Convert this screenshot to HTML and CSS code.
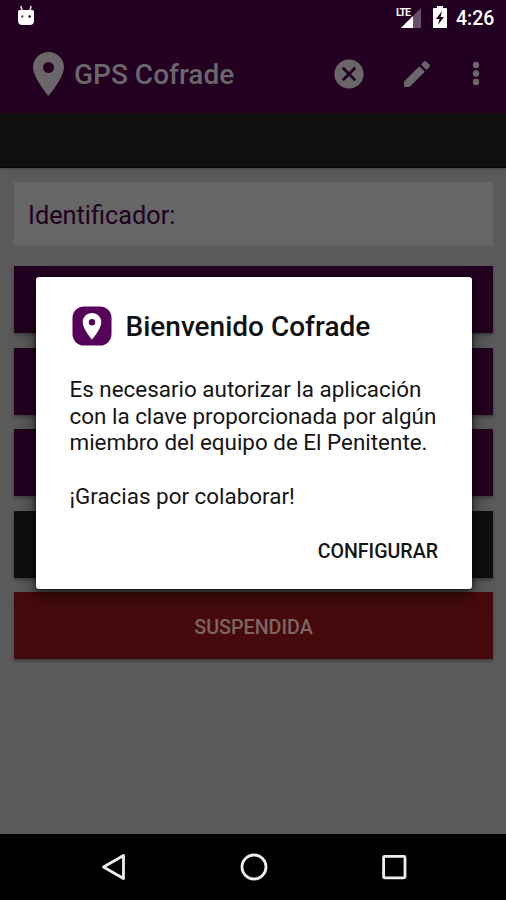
FILE: index.html
```html
<!DOCTYPE html>
<html lang="es">
<head>
<meta charset="utf-8">
<title>GPS Cofrade</title>
<link rel="stylesheet" href="styles.css">
</head>
<body>
<div class="screen">
  <header class="header">
    <div class="status">
      <svg class="debug" width="18" height="22" viewBox="0 0 18 22"><path d="M4 1l1 5M14 1l-1 5" stroke="#ddd" stroke-width="1.6"/><path d="M1 6.500q0-1.500 1.500-1.500h13q1.500 0 1.500 1.500v9q0 4.500-4.500 4.500h-7q-4.500 0-4.500-4.500z" fill="#fff"/><circle cx="5.200" cy="11.500" r="1.200" fill="#5b5060"/><circle cx="12.700" cy="11.500" r="1.300" fill="#230021"/></svg>
      <div class="signal">
        <span class="lte">LTE</span>
        <svg width="22" height="22" viewBox="0 0 22 22"><path d="M21 1v20H1z" fill="#68506a"/><path d="M13 9v12H1z" fill="#fff"/></svg>
      </div>
      <svg class="battery" width="14" height="22" viewBox="0 0 14 22"><path d="M4 0h6v2h3q1 0 1 1v18q0 1-1 1H1q-1 0-1-1V3q0-1 1-1h3z" fill="#fff"/><path d="M9 5L3 13h3.500L5 19l6-8H7.500z" fill="#230021"/></svg>
      <span class="clock">4:26</span>
    </div>
    <div class="toolbar">
      <svg class="pin" width="31" height="44" viewBox="0 0 31 44"><path fill-rule="evenodd" d="M15.500 0C7 0 0 6.700 0 15.300C0 26 15.500 44 15.500 44S31 26 31 15.300C31 6.700 24 0 15.500 0zm0 10a5.500 5.500 0 1 1 0 11a5.500 5.500 0 1 1 0-11z" fill="#6a666a"/></svg>
      <span class="title">GPS Cofrade</span>
      <svg class="close" width="30" height="30" viewBox="0 0 30 30"><circle cx="15" cy="15" r="14.600" fill="#6a666a"/><path d="M8.800 8.800l12.400 12.400M21.200 8.800L8.800 21.200" stroke="#230021" stroke-width="2.800"/></svg>
      <svg class="edit" width="28" height="28" viewBox="0 0 28 28"><path d="M1 21.500V27h5.500L21.800 11.700l-5.500-5.500zM26.300 7.200q1.300-1.300 0-2.600L23.400 1.700q-1.300-1.300-2.600 0L18 4.500l5.500 5.500z" fill="#6a666a"/></svg>
      <svg class="more" width="8" height="26" viewBox="0 0 8 26"><g fill="#6a666a"><circle cx="4" cy="4" r="3.200"/><circle cx="4" cy="12.500" r="3.200"/><circle cx="4" cy="21" r="3.200"/></g></svg>
    </div>
  </header>
  <div class="band"></div>
  <main class="content">
    <div class="field"><span>Identificador:</span></div>
    <div class="actions">
      <div class="action"></div>
      <div class="action"></div>
      <div class="action"></div>
      <div class="action dark"></div>
      <div class="action red"><span>SUSPENDIDA</span></div>
    </div>
  </main>
  <nav class="nav">
    <svg width="28" height="30" viewBox="0 0 28 30"><path d="M23.500 3.500v23L3.500 15z" fill="none" stroke="#eee" stroke-width="2.800" stroke-linejoin="round"/></svg>
    <svg width="28" height="30" viewBox="0 0 28 30"><circle cx="14" cy="15" r="12" fill="none" stroke="#eee" stroke-width="2.800"/></svg>
    <svg width="28" height="30" viewBox="0 0 28 30"><rect x="3.600" y="4.400" width="21.400" height="21.400" rx="1" fill="none" stroke="#eee" stroke-width="2.800"/></svg>
  </nav>
  <section class="dialog">
    <div class="dialog-head">
      <svg width="40" height="40" viewBox="0 0 40 40"><rect x=".5" y=".5" width="39" height="39" rx="11.500" fill="#550059"/><path fill-rule="evenodd" d="M20 7C14.800 7 10.700 11 10.700 16.200C10.700 23 20 33.500 20 33.500S29.300 23 29.300 16.200C29.300 11 25.200 7 20 7zm0 6a3.200 3.200 0 1 1 0 6.400a3.200 3.200 0 1 1 0-6.400z" fill="#fff"/></svg>
      <h1>Bienvenido Cofrade</h1>
    </div>
    <div class="message">
      <p>Es necesario autorizar la aplicación<br>con la clave proporcionada por algún<br>miembro del equipo de El Penitente.</p>
      <p>¡Gracias por colaborar!</p>
    </div>
    <div class="dialog-foot"><span>CONFIGURAR</span></div>
  </section>
</div>
</body>
</html>
```

FILE: styles.css
```css
* { box-sizing: border-box; }
body { margin: 0; font-family: Roboto, "Liberation Sans", sans-serif; }
svg { display: block; flex: none; }
.screen { position: relative; display: flex; flex-direction: column; width: 506px; height: 900px; overflow: hidden; background: #5a5a5a; }
.header { height: 113px; background: #230021; }
.status { display: flex; align-items: center; height: 34px; padding: 0 11px 0 17px; }
.debug { margin: -2px auto 0 0; }
.signal { position: relative; width: 22px; height: 22px; margin-right: 11px; }
.lte { position: absolute; left: -5px; top: 1px; padding: 0 1px; background: #230021; color: #fff; font-size: 10.5px; font-weight: 700; line-height: 11px; letter-spacing: -1px; }
.signal svg { margin-top: 1px; }
.clock { width: 39px; margin-left: 9px; color: #fff; font-size: 19.5px; font-weight: 500; line-height: 24px; white-space: nowrap; margin-top: 3px; }
.toolbar { display: flex; align-items: center; height: 79px; padding: 0 26px 0 33px; }
.pin { margin-top: 0; }
.title { flex: 1; margin-left: 10px; margin-top: 2px; color: #6a666a; font-size: 28px; font-weight: 500; line-height: 34px; white-space: nowrap; }
.close { margin-right: 39px; }
.edit { margin-right: 41px; }
.band { height: 55px; background: #0f0f0f; border-bottom: 1px solid #050505; box-shadow: 0 1px 2px #444; }
.content { flex: 1; padding: 14px 13px 0 14px; }
.field { display: flex; align-items: center; height: 63px; padding: 3px 14px 0; background: #666; box-shadow: 0 1px 1px #606060; color: #210020; font-size: 25.3px; }
.actions { display: flex; flex-direction: column; gap: 14.5px; margin-top: 21px; }
.action { display: flex; align-items: center; justify-content: center; height: 67px; background: #230021; box-shadow: 0 2px 3px #3d3d3d; }
.dark { background: #0f0f0f; }
.red { padding-top: 3px; background: #470a0c; color: #7c6562; font-size: 19.7px; font-weight: 500; }
.nav { display: flex; justify-content: center; gap: 112px; height: 66px; padding: 18px 0 0 1px; background: #000; }
.dialog { position: absolute; left: 36px; top: 277px; width: 436px; height: 312px; padding: 28px 34px 0 33.5px; border-radius: 3px; background: #fff; box-shadow: 0 8px 20px #0008, 0 1px 4px #000b; color: #151515; }
.dialog-head { display: flex; align-items: center; gap: 14px; height: 41px; padding-left: 2px; }
h1 { margin: 2px 0 0; font-size: 28px; font-weight: 500; line-height: 34px; white-space: nowrap; color: #111; }
.message { margin-top: 30px; font-size: 22.42px; line-height: 26.7px; white-space: nowrap; }
.message p { margin: 0 0 26.7px; }
.dialog-foot { display: flex; justify-content: flex-end; margin-top: 30px; font-size: 19.6px; font-weight: 500; line-height: 24px; }
```
